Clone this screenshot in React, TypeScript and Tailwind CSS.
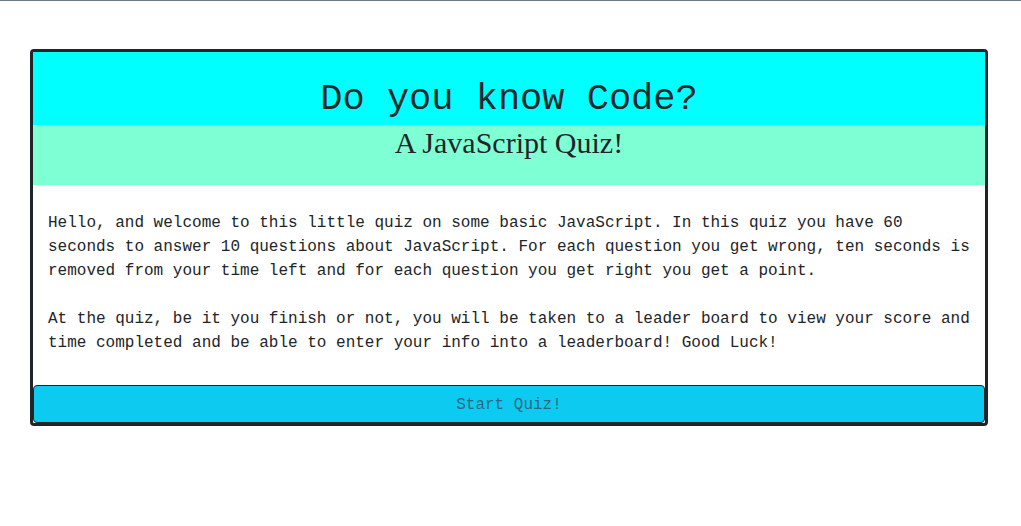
export default function App() {
  const mono = { fontFamily: '"Liberation Mono", "DejaVu Sans Mono", monospace' };

  return (
    <div className="min-h-[526px] bg-white" style={mono}>
      <div className="h-px bg-[#6b7a86]" />

      <div className="ml-[30px] mt-[48px] w-[958px] rounded-[4px] border-[3px] border-[#212529] bg-white">
        {/* Header */}
        <div className="flex h-[73px] items-end justify-center bg-[#00ffff] pb-[3px]">
          <h1 className="text-[37px] font-light leading-[46px] text-[#1f2a30]">Do you know Code?</h1>
        </div>
        <div className="flex h-[60px] justify-center bg-[#7fffd4]">
          <h2
            className="text-[30px] leading-[36px] text-[#212529]"
            style={{ fontFamily: '"Liberation Serif", "Times New Roman", serif' }}
          >
            A JavaScript Quiz!
          </h2>
        </div>

        {/* Intro */}
        <div className="pl-[15px] pr-[14px] pt-[26px] pb-[30px] text-[16px] leading-[24px] text-[#212529]">
          <p>
            Hello, and welcome to this little quiz on some basic JavaScript. In this quiz you have 60 seconds to answer 10
            questions about JavaScript. For each question you get wrong, ten seconds is removed from your time left and for
            each question you get right you get a point.
          </p>
          <p className="mt-[24px]">
            At the quiz, be it you finish or not, you will be taken to a leader board to view your score and time completed
            and be able to enter your info into a leaderboard! Good Luck!
          </p>
        </div>

        <button className="block h-[38px] w-full rounded-[4px] border border-[#212529] bg-[#0dcaf0] pt-[2px] text-[16px] text-[#2a6a82]">
          Start Quiz!
        </button>
      </div>
    </div>
  );
}
